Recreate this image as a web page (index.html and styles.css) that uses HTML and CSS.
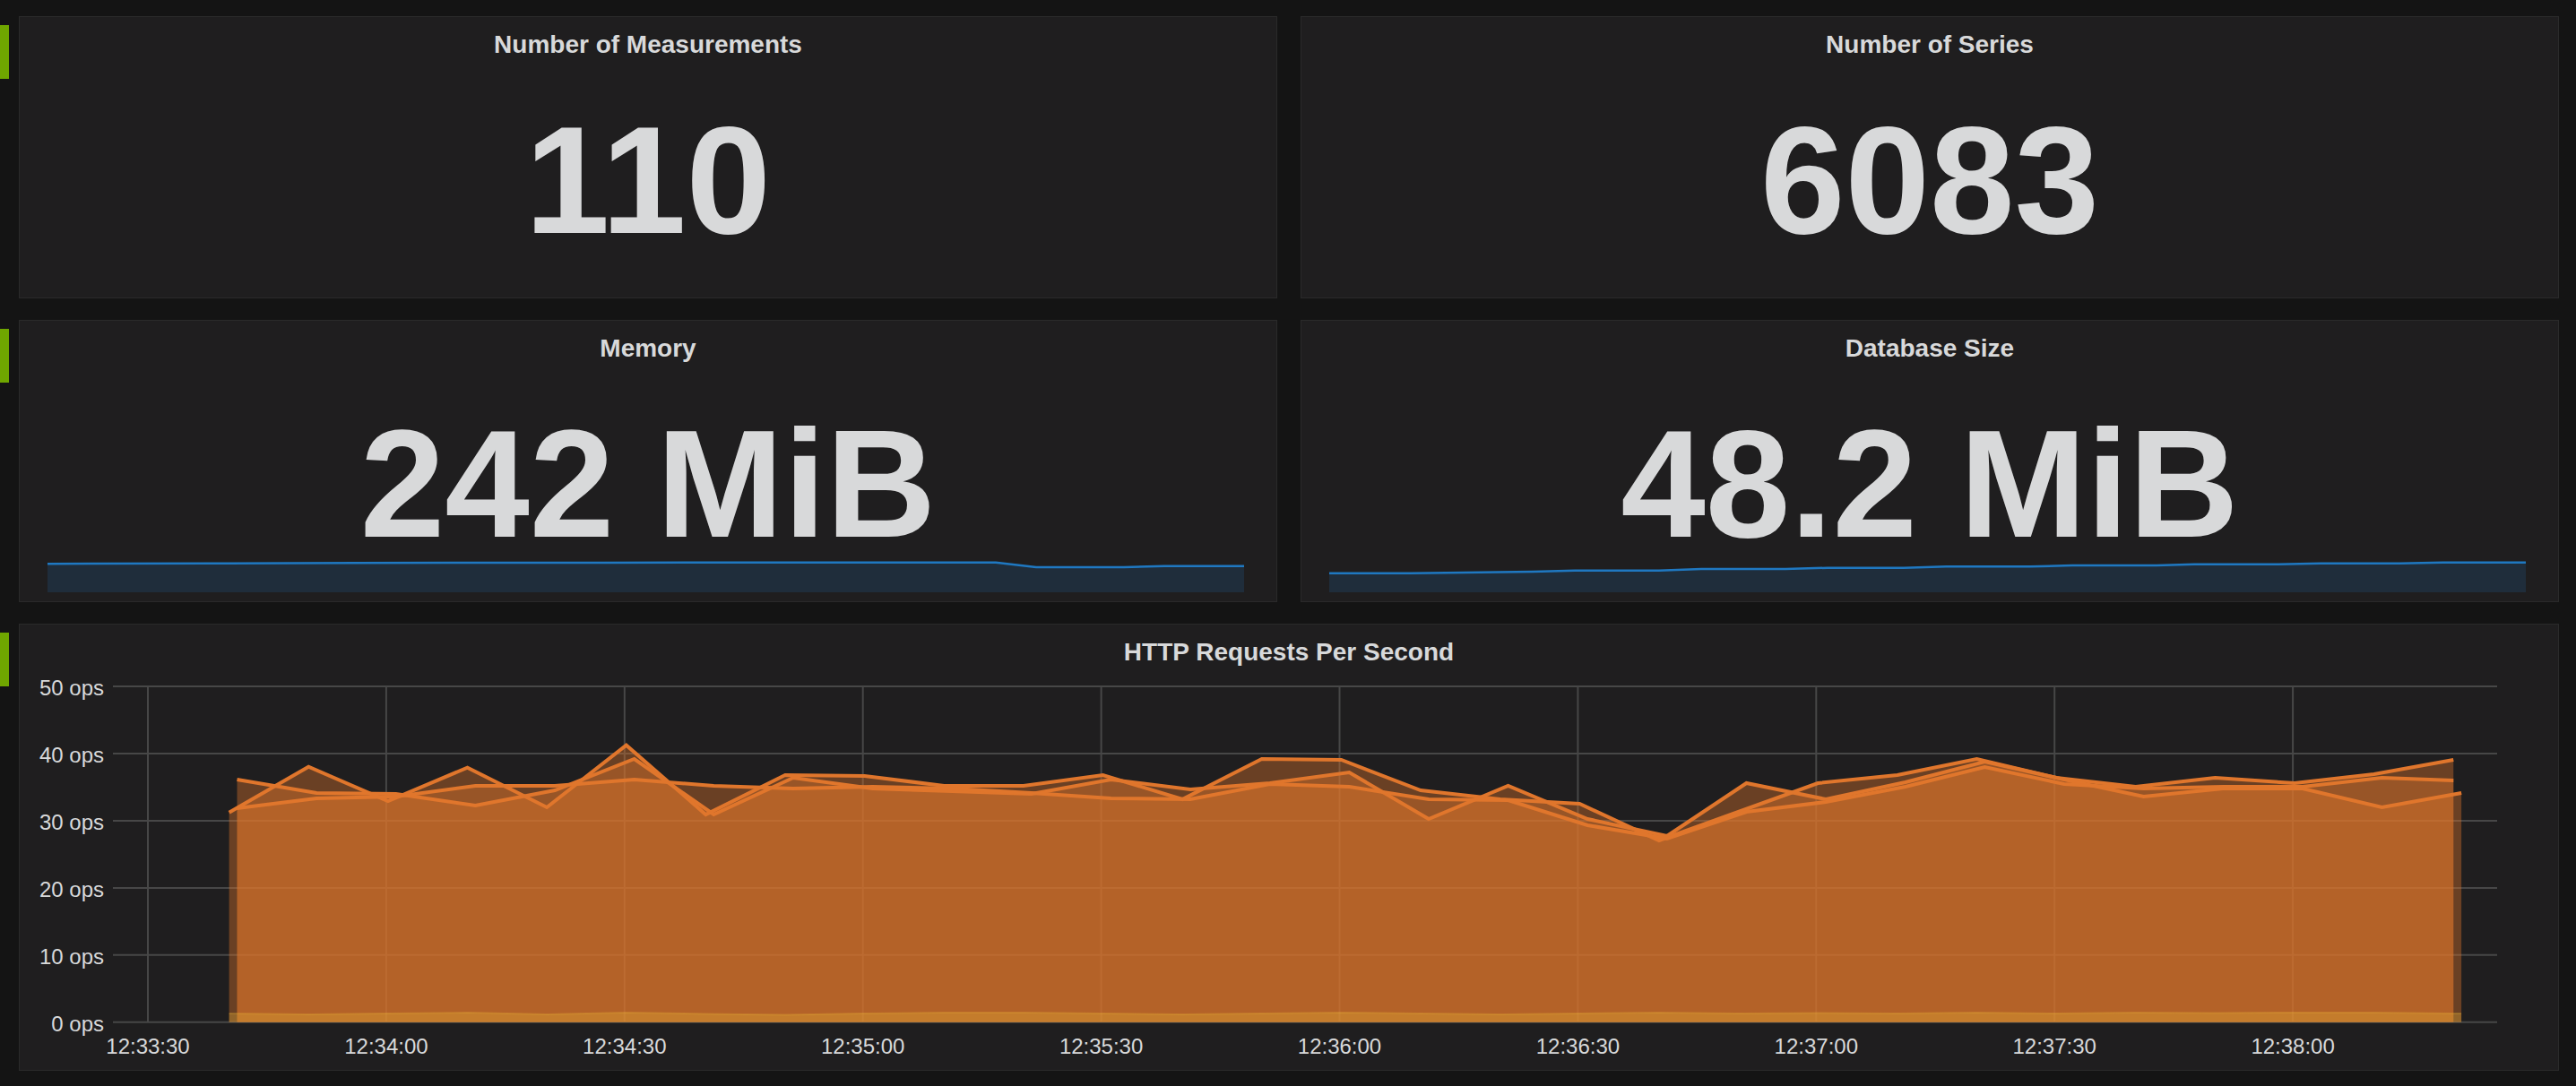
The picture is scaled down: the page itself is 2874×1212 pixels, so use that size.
FILE: index.html
```html
<!DOCTYPE html>
<html>
<head>
<meta charset="utf-8">
<title>InfluxDB Dashboard</title>
<link rel="stylesheet" href="styles.css">
</head>
<body>
<div class="dashboard">
  <div class="row">
    <div class="row-handle"></div>
    <div class="row-panels">
      <div class="panel stat">
        <div class="panel-title">Number of Measurements</div>
        <div class="stat-value">110</div>
      </div>
      <div class="panel stat">
        <div class="panel-title">Number of Series</div>
        <div class="stat-value">6083</div>
      </div>
    </div>
  </div>

  <div class="row">
    <div class="row-handle"></div>
    <div class="row-panels">
      <div class="panel stat">
        <div class="panel-title">Memory</div>
        <div class="stat-value">242 MiB</div>
        <div class="sparkline">
          <svg viewBox="0 0 1335 44" preserveAspectRatio="none">
            <polygon class="spark-fill" points="0,44 0,12.3 49,12 179,11.7 344,11.3 451,11 621,11 768,10.7 898,10.7 1058,10.7 1103,16 1201,16 1246,14.7 1335,14.7 1335,44"/>
            <polyline class="spark-line" points="0,12.3 49,12 179,11.7 344,11.3 451,11 621,11 768,10.7 898,10.7 1058,10.7 1103,16 1201,16 1246,14.7 1335,14.7"/>
          </svg>
        </div>
      </div>
      <div class="panel stat">
        <div class="panel-title">Database Size</div>
        <div class="stat-value">48.2 MiB</div>
        <div class="sparkline">
          <svg viewBox="0 0 1335 44" preserveAspectRatio="none">
            <polygon class="spark-fill" points="0,44 0,22.7 91,22.7 227,21 274,19.7 368,19.7 415,18 509,18 556,16.7 641,16.7 688,15.3 782,15.3 829,14 923,14 965,12.7 1059,12.7 1106,11.7 1195,11.7 1242.5,10.7 1335,10.7 1335,44"/>
            <polyline class="spark-line" points="0,22.7 91,22.7 227,21 274,19.7 368,19.7 415,18 509,18 556,16.7 641,16.7 688,15.3 782,15.3 829,14 923,14 965,12.7 1059,12.7 1106,11.7 1195,11.7 1242.5,10.7 1335,10.7"/>
          </svg>
        </div>
      </div>
    </div>
  </div>

  <div class="row">
    <div class="row-handle"></div>
    <div class="row-panels">
      <div class="panel graph">
        <div class="panel-title">HTTP Requests Per Second</div>
        <svg class="graph-svg" viewBox="0 0 2832 440">
          <g class="grid">
            <line x1="104" y1="20" x2="2764" y2="20"/>
            <line x1="104" y1="94.96" x2="2764" y2="94.96"/>
            <line x1="104" y1="169.92" x2="2764" y2="169.92"/>
            <line x1="104" y1="244.88" x2="2764" y2="244.88"/>
            <line x1="104" y1="319.84" x2="2764" y2="319.84"/>
            <line x1="104" y1="394.8" x2="2764" y2="394.8"/>
            <line x1="143" y1="20" x2="143" y2="394.8"/>
            <line x1="408.9" y1="20" x2="408.9" y2="394.8"/>
            <line x1="674.8" y1="20" x2="674.8" y2="394.8"/>
            <line x1="940.7" y1="20" x2="940.7" y2="394.8"/>
            <line x1="1206.6" y1="20" x2="1206.6" y2="394.8"/>
            <line x1="1472.5" y1="20" x2="1472.5" y2="394.8"/>
            <line x1="1738.4" y1="20" x2="1738.4" y2="394.8"/>
            <line x1="2004.3" y1="20" x2="2004.3" y2="394.8"/>
            <line x1="2270.2" y1="20" x2="2270.2" y2="394.8"/>
            <line x1="2536.1" y1="20" x2="2536.1" y2="394.8"/>
          </g>

          <g class="fills">
            <g transform="translate(233.6 -746) scale(88.63 1)">
              <polygon class="fill-orange" points="0,1140.8 0,906.7 1,855.7 2,894 3,856.7 4,901 5,831.7 6,909 7,865 8,866 9,877 10,877 11,865 12,892 13,847 14,848 15,882 16,892 17,897 18,938 19,906 20,874 21,865 22,847 23,868 24,878 25,868 26,874 27,864 28,848 28,1140.8"/>
            </g>
            <g transform="translate(242.5 -746) scale(88.63 1)">
              <polygon class="fill-orange" points="0,1140.8 0,870 1,885 2,886 3,899 4,882 5,847 6,909 7,868 8,880 9,883 10,886 11,870 12,881 13,874 14,862 15,914 16,877 17,914 18,933 19,874 20,892 21,873 22,850 23,870 24,889 25,880 26,880 27,901 28,885 28,1140.8"/>
              <polygon class="fill-orange" points="0,1140.8 0,902 1,891 2,889 3,877 4,877 5,870 6,877 7,880 8,878 9,880 10,885 11,891 12,892 13,875 14,878 15,892 16,893 17,921 18,936 19,906 20,895 21,878 22,856 23,875 24,880 25,878 26,878 27,868 27.9,871 27.9,1140.8"/>
            </g>
            <g transform="translate(233.6 -746) scale(88.63 1)">
              <polygon class="fill-yellow" points="0,1140.8 0,1131 1,1132 2,1131 3,1130 4,1132 5,1130 6,1131.5 7,1132.5 8,1131 9,1130 10,1130 11,1131 12,1132 13,1131 14,1130 15,1131 16,1132 17,1131 18,1130 19,1131 20,1130.5 21,1131 22,1130 23,1131 24,1130 25,1130.5 26,1130 27,1130 28,1131 28.1,1131 28.1,1140.8"/>
            </g>
          </g>

          <g class="lines">
            <g transform="translate(233.6 -746) scale(88.63 1)">
              <polyline class="line-orange" points="0,906.7 1,855.7 2,894 3,856.7 4,901 5,831.7 6,909 7,865 8,866 9,877 10,877 11,865 12,892 13,847 14,848 15,882 16,892 17,897 18,938 19,906 20,874 21,865 22,847 23,868 24,878 25,868 26,874 27,864 28,848"/>
            </g>
            <g transform="translate(242.5 -746) scale(88.63 1)">
              <polyline class="line-orange" points="0,870 1,885 2,886 3,899 4,882 5,847 6,909 7,868 8,880 9,883 10,886 11,870 12,881 13,874 14,862 15,914 16,877 17,914 18,933 19,874 20,892 21,873 22,850 23,870 24,889 25,880 26,880 27,901 28,885"/>
              <polyline class="line-orange" points="0,902 1,891 2,889 3,877 4,877 5,870 6,877 7,880 8,878 9,880 10,885 11,891 12,892 13,875 14,878 15,892 16,893 17,921 18,936 19,906 20,895 21,878 22,856 23,875 24,880 25,878 26,878 27,868 27.9,871"/>
            </g>
            <g transform="translate(233.6 -746) scale(88.63 1)">
              <polyline class="line-yellow" points="0,1131 1,1132 2,1131 3,1130 4,1132 5,1130 6,1131.5 7,1132.5 8,1131 9,1130 10,1130 11,1131 12,1132 13,1131 14,1130 15,1131 16,1132 17,1131 18,1130 19,1131 20,1130.5 21,1131 22,1130 23,1131 24,1130 25,1130.5 26,1130 27,1130 28,1131 28.1,1131"/>
            </g>
          </g>

          <g class="axis-y">
            <text x="94" y="30">50 ops</text>
            <text x="94" y="104.96">40 ops</text>
            <text x="94" y="179.92">30 ops</text>
            <text x="94" y="254.88">20 ops</text>
            <text x="94" y="329.84">10 ops</text>
            <text x="94" y="404.8">0 ops</text>
          </g>
          <g class="axis-x">
            <text x="143" y="430">12:33:30</text>
            <text x="408.9" y="430">12:34:00</text>
            <text x="674.8" y="430">12:34:30</text>
            <text x="940.7" y="430">12:35:00</text>
            <text x="1206.6" y="430">12:35:30</text>
            <text x="1472.5" y="430">12:36:00</text>
            <text x="1738.4" y="430">12:36:30</text>
            <text x="2004.3" y="430">12:37:00</text>
            <text x="2270.2" y="430">12:37:30</text>
            <text x="2536.1" y="430">12:38:00</text>
          </g>
        </svg>
      </div>
    </div>
  </div>
</div>
</body>
</html>
```

FILE: styles.css
```css
html, body {
  margin: 0;
  padding: 0;
  background: #141414;
}

body {
  font-family: "Liberation Sans", Arial, Helvetica, sans-serif;
  color: #d8d9da;
}

.dashboard {
  display: flex;
  flex-direction: column;
  gap: 24px;
  padding: 18px 19px 0 0;
}

.row {
  display: flex;
  align-items: flex-start;
}

.row-handle {
  flex: none;
  width: 10px;
  height: 60px;
  margin-top: 10px;
  background: #6fa600;
}

.row-panels {
  flex: 1;
  display: flex;
  gap: 26px;
  margin-left: 11px;
}

.panel {
  flex: 1;
  box-sizing: border-box;
  background: #1f1e1f;
  border: 1px solid #2a2a2a;
  padding-top: 13px;
  display: flex;
  flex-direction: column;
}

.panel-title {
  font-size: 28px;
  font-weight: bold;
  line-height: 36px;
  text-align: center;
  color: #d8d9da;
}

.stat {
  height: 315px;
}

.stat-value {
  margin-top: 58px;
  font-size: 170px;
  font-weight: bold;
  line-height: 150px;
  text-align: center;
  color: #d8d9da;
  white-space: nowrap;
}

.sparkline {
  margin: 2px 36px 0 31px;
  height: 44px;
}

.sparkline svg {
  display: block;
  width: 100%;
  height: 44px;
}

.spark-fill {
  fill: rgba(31, 118, 189, 0.18);
}

.spark-line {
  fill: none;
  stroke: #1f78c1;
  stroke-width: 2.5;
}

.graph {
  height: 499px;
}

.graph-svg {
  display: block;
  width: 2832px;
  height: 440px;
}

.grid line {
  stroke: #474747;
  stroke-width: 2;
}

.fill-orange {
  fill: #e0762c;
  fill-opacity: 0.39;
}

.fill-yellow {
  fill: #eab839;
  fill-opacity: 0.3;
}

.line-orange {
  fill: none;
  stroke: #e0762c;
  stroke-width: 4;
  stroke-linejoin: miter;
  vector-effect: non-scaling-stroke;
}

.line-yellow {
  fill: none;
  stroke: #eab839;
  stroke-opacity: 0.25;
  stroke-width: 2;
  vector-effect: non-scaling-stroke;
}

.axis-y text,
.axis-x text {
  font-family: "Liberation Sans", Arial, Helvetica, sans-serif;
  font-size: 24px;
  fill: #d8d9da;
}

.axis-y text {
  text-anchor: end;
}

.axis-x text {
  text-anchor: middle;
}
```
